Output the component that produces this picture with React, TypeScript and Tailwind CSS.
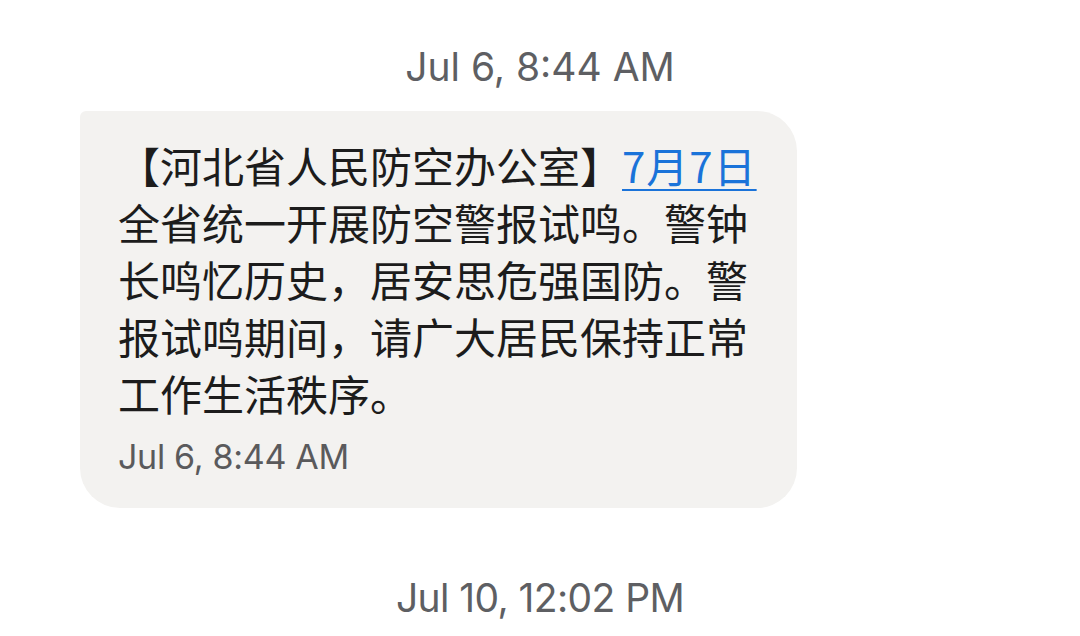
export default function App() {
  const lines = [
    '全省统一开展防空警报试鸣。警钟',
    '长鸣忆历史，居安思危强国防。警',
    '报试鸣期间，请广大居民保持正常',
    '工作生活秩序。',
  ];

  return (
    <div className="w-[1080px] h-[636px] bg-white overflow-hidden flex flex-col">
      {/* date header */}
      <div className="pt-[47px] text-center text-[39px] leading-[40px] text-[#5e5f63] font-['Inter',sans-serif]">
        Jul 6, 8:44 AM
      </div>

      {/* incoming message bubble */}
      <div className="mt-[24px] ml-[80px] w-[717px] bg-[#f3f2f0] rounded-[40px] rounded-tl-[6px] pt-[25px] pb-[34px] pl-[38px] pr-[39px]">
        <div className="text-[42px] leading-[57px] text-[#1c1c1c] font-['Noto_Sans_CJK_SC',sans-serif] whitespace-nowrap">
          【河北省人民防空办公室】
          <span className="text-[#1a73d9] underline decoration-2 underline-offset-[6px] tracking-[1px]">7月7日</span>
          {lines.map((l) => (
            <div key={l}>{l}</div>
          ))}
        </div>
        <div className="mt-[19px] text-[34px] leading-[34px] text-[#5a5a5c] font-['Inter',sans-serif] tracking-[-0.3px]">
          Jul 6, 8:44 AM
        </div>
      </div>

      <div className="mt-[70px] text-center text-[39px] leading-[40px] tracking-[-0.6px] text-[#5e5f63] font-['Inter',sans-serif]">
        Jul 10, 12:02 PM
      </div>
    </div>
  );
}
